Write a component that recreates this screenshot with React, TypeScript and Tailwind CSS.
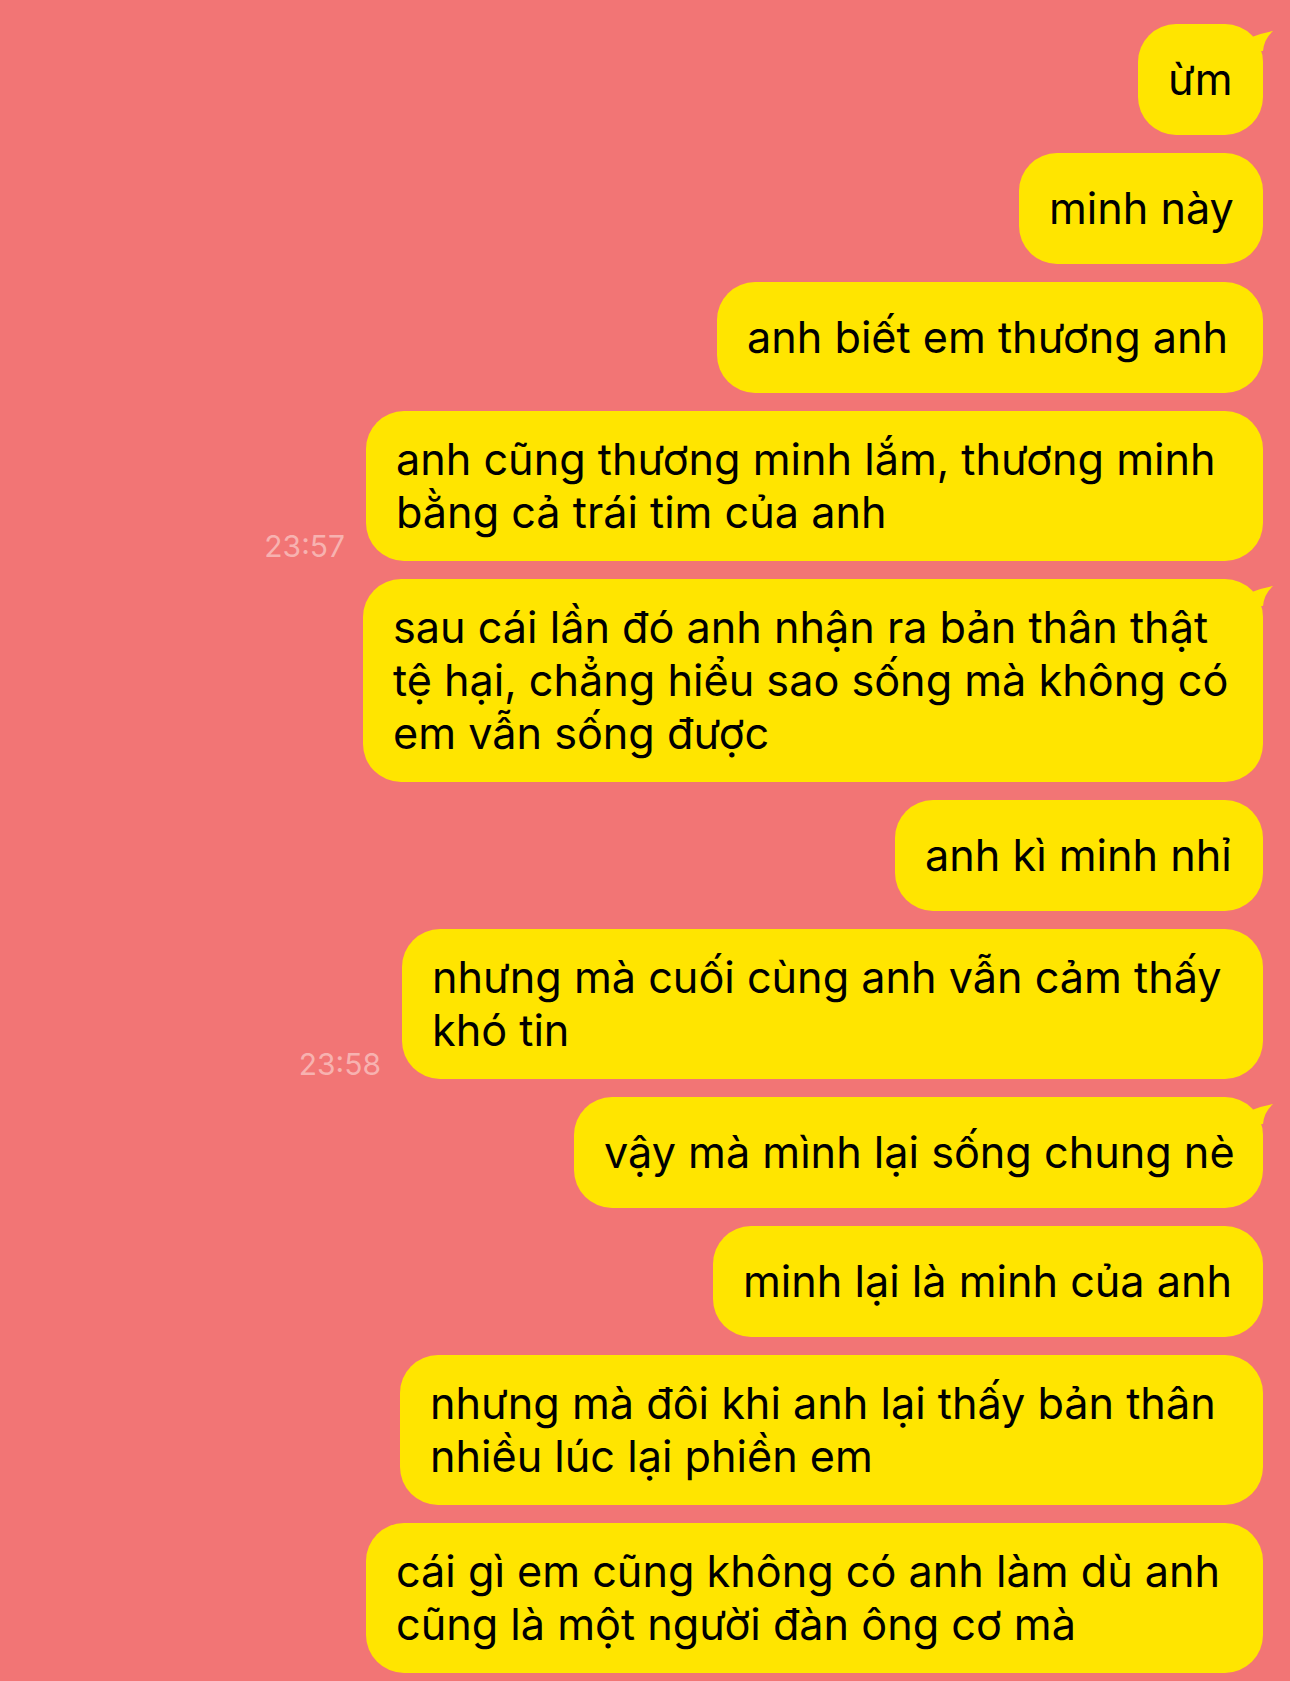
import type { ReactNode } from 'react'

interface Message {
  lines: string[]
  width: string
  time?: string
  tail?: boolean
}

const messages: Message[] = [
  { lines: ['ừm'], width: 'w-[125px]', tail: true },
  { lines: ['minh này'], width: 'w-[244px]' },
  { lines: ['anh biết em thương anh'], width: 'w-[546px]' },
  { lines: ['anh cũng thương minh lắm, thương minh', 'bằng cả trái tim của anh'], width: 'w-[897px]', time: '23:57' },
  { lines: ['sau cái lần đó anh nhận ra bản thân thật', 'tệ hại, chẳng hiểu sao sống mà không có', 'em vẫn sống được'], width: 'w-[900px]', tail: true },
  { lines: ['anh kì minh nhỉ'], width: 'w-[368px]' },
  { lines: ['nhưng mà cuối cùng anh vẫn cảm thấy', 'khó tin'], width: 'w-[861px]', time: '23:58' },
  { lines: ['vậy mà mình lại sống chung nè'], width: 'w-[689px]', tail: true },
  { lines: ['minh lại là minh của anh'], width: 'w-[550px]' },
  { lines: ['nhưng mà đôi khi anh lại thấy bản thân', 'nhiều lúc lại phiền em'], width: 'w-[863px]' },
  { lines: ['cái gì em cũng không có anh làm dù anh', 'cũng là một người đàn ông cơ mà'], width: 'w-[897px]' },
]

function Tail() {
  return (
    <svg className="absolute -right-[11px] -top-[3px]" width="34" height="34" viewBox="0 0 34 34">
      <path d="M6 22 L12 16 Q22 12 33 10 Q24 18 23 30 L6 30 Z" fill="#FFE500" />
    </svg>
  )
}

function Bubble({ message }: { message: Message }): ReactNode {
  return (
    <div className="flex items-end gap-[21px]">
      {message.time && (
        <span className="mb-[0px] text-[30px] leading-none text-[#f7b2b0]">{message.time}</span>
      )}
      <div
        className={`relative flex min-h-[111px] flex-col justify-center rounded-[38px] bg-[#FFE500] py-[22px] pl-[30px] pr-[26px] text-[43.2px] leading-[53px] text-black ${message.width}`}
      >
        {message.tail && <Tail />}
        {message.lines.map(line => (
          <div key={line} className="whitespace-nowrap">{line}</div>
        ))}
      </div>
    </div>
  )
}

export default function App() {
  return (
    <div
      className="flex min-h-[1681px] w-[1290px] flex-col items-end gap-[18px] bg-[#F27575] pr-[27px] pt-[24px]"
      style={{ fontFamily: 'Inter, "Noto Sans", sans-serif' }}
    >
      {messages.map((message, index) => (
        <Bubble key={index} message={message} />
      ))}
    </div>
  )
}
